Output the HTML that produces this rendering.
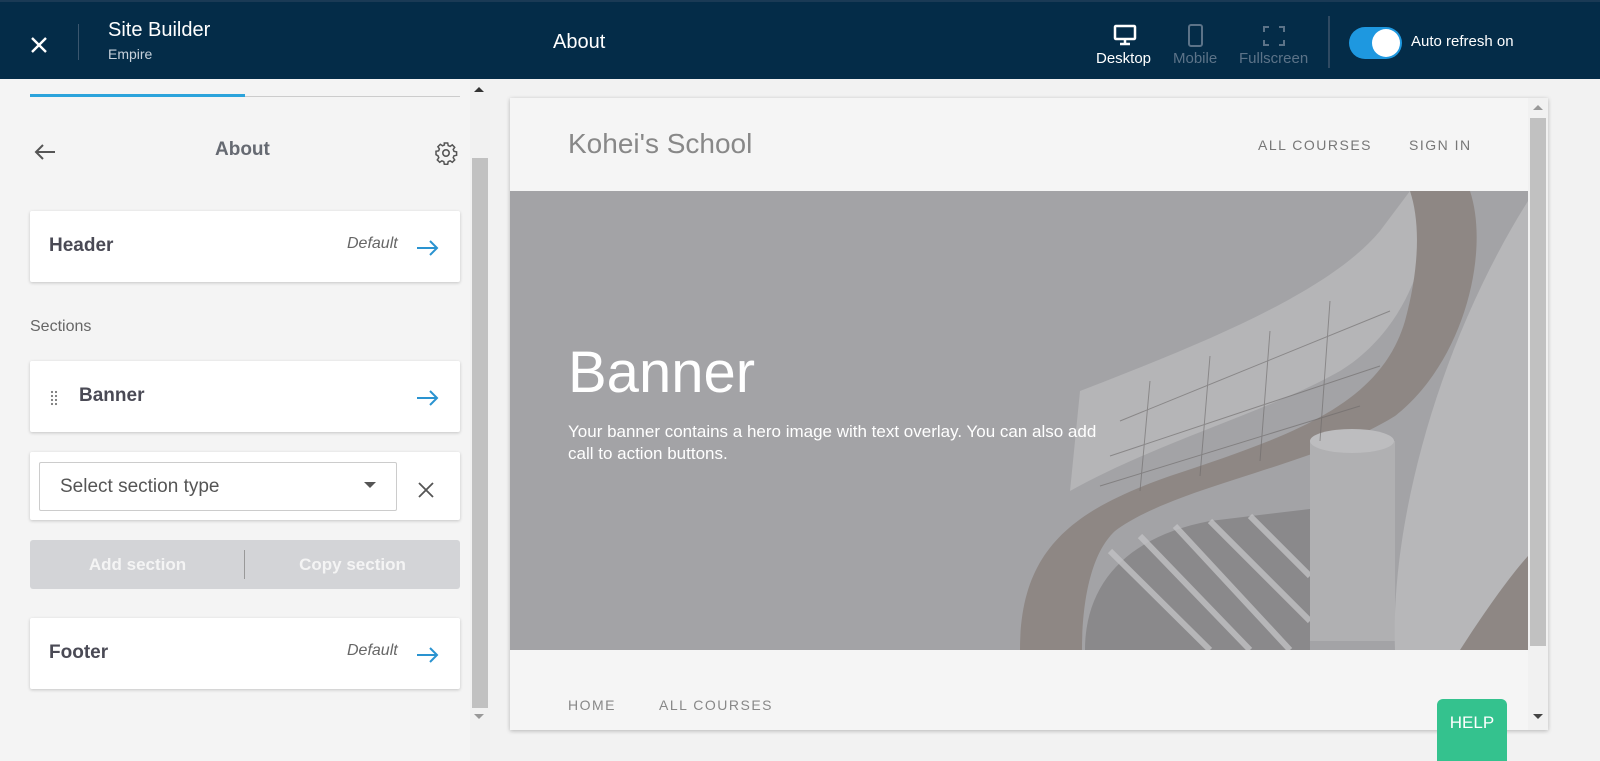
<!DOCTYPE html>
<html><head><style>
*{box-sizing:border-box;margin:0;padding:0}
body{width:1600px;height:761px;overflow:hidden;background:#f2f2f2;font-family:"Liberation Sans",sans-serif;position:relative}
.top{position:absolute;left:0;top:0;width:1600px;height:79px;background:#042c48;border-top:2px solid #1a3a55;color:#fff}
.abs{position:absolute}
.card{position:absolute;left:30px;width:430px;background:#fff;box-shadow:0 1px 3px rgba(0,0,0,.2);border-radius:2px}
.lbl{font-weight:bold;font-size:19px;color:#4a4a55}
.def{font-style:italic;color:#666;font-size:16px}
</style></head><body>
<div class="top">
 <svg class="abs" style="left:30px;top:34px" width="18" height="18" viewBox="0 0 18 18"><path d="M2 2L16 16M16 2L2 16" stroke="#fff" stroke-width="2.4"/></svg>
 <div class="abs" style="left:78px;top:22px;width:1px;height:36px;background:#3a566e"></div>
 <div class="abs" style="left:108px;top:17px;font-size:20px">Site Builder</div>
 <div class="abs" style="left:108px;top:44px;font-size:14px;color:#c8d2dc">Empire</div>
 <div class="abs" style="left:553px;top:29px;font-size:20px">About</div>
 <svg class="abs" style="left:1113px;top:22px" width="24" height="22" viewBox="0 0 24 22"><rect x="2" y="2" width="20" height="13" rx="1" fill="none" stroke="#fff" stroke-width="2.5"/><path d="M12 15v4M7 20h10" stroke="#fff" stroke-width="2.5"/></svg>
 <div class="abs" style="left:1096px;top:48px;font-size:15px">Desktop</div>
 <svg class="abs" style="left:1187px;top:21px" width="18" height="26"><rect x="2" y="2" width="13" height="21" rx="2" fill="none" stroke="#5c7388" stroke-width="2"/></svg>
 <div class="abs" style="left:1173px;top:48px;font-size:15px;color:#5c7388">Mobile</div>
 <svg class="abs" style="left:1263px;top:24px" width="22" height="20"><path d="M1 6V1h5M16 1h5v5M21 14v5h-5M6 19H1v-5" fill="none" stroke="#5c7388" stroke-width="2"/></svg>
 <div class="abs" style="left:1239px;top:48px;font-size:15px;color:#5c7388">Fullscreen</div>
 <div class="abs" style="left:1328px;top:14px;width:2px;height:52px;background:#2f4a62"></div>
 <div class="abs" style="left:1349px;top:25px;width:53px;height:32px;border-radius:16px;background:#1e98e0"></div>
 <div class="abs" style="left:1372px;top:27px;width:28px;height:28px;border-radius:50%;background:#fff"></div>
 <div class="abs" style="left:1411px;top:31px;font-size:15px">Auto refresh on</div>
</div>
<div class="abs" style="left:0;top:79px;width:470px;height:682px;background:#f4f4f4"></div>
<div class="abs" style="left:30px;top:96px;width:430px;height:1px;background:#ccc"></div>
<div class="abs" style="left:30px;top:94px;width:215px;height:3px;background:#2ba3db"></div>
<svg class="abs" style="left:33px;top:143px" width="24" height="18"><path d="M22 9H3M10 2L3 9l7 7" fill="none" stroke="#555" stroke-width="2"/></svg>
<div class="abs lbl" style="left:215px;top:139px;color:#666a72">About</div>
<svg class="abs" style="left:434px;top:141px" width="24" height="24" viewBox="0 0 24 24"><circle cx="12" cy="12" r="3.2" fill="none" stroke="#555" stroke-width="1.6"/><path d="M10.3 2h3.4l.5 2.6 1.9.8 2.2-1.5 2.4 2.4-1.5 2.2.8 1.9 2.6.5v3.4l-2.6.5-.8 1.9 1.5 2.2-2.4 2.4-2.2-1.5-1.9.8-.5 2.6h-3.4l-.5-2.6-1.9-.8-2.2 1.5-2.4-2.4 1.5-2.2-.8-1.9L2 13.7v-3.4l2.6-.5.8-1.9-1.5-2.2 2.4-2.4 2.2 1.5 1.9-.8z" fill="none" stroke="#555" stroke-width="1.5"/></svg>
<div class="card" style="top:211px;height:71px"><div class="abs lbl" style="left:19px;top:24px">Header</div><div class="abs def" style="left:317px;top:24px">Default</div><svg class="abs" style="left:386px;top:28px" width="24" height="18"><path d="M1 9h20M14 2l7 7-7 7" fill="none" stroke="#2a93d0" stroke-width="2"/></svg></div>
<div class="abs" style="left:30px;top:318px;font-size:16px;color:#666">Sections</div>
<div class="card" style="top:361px;height:71px"><svg class="abs" style="left:20px;top:29px" width="8" height="18"><g fill="#777"><circle cx="2" cy="2" r="1.1"/><circle cx="6" cy="2" r="1.1"/><circle cx="2" cy="6" r="1.1"/><circle cx="6" cy="6" r="1.1"/><circle cx="2" cy="10" r="1.1"/><circle cx="6" cy="10" r="1.1"/><circle cx="2" cy="14" r="1.1"/><circle cx="6" cy="14" r="1.1"/></g></svg><div class="abs lbl" style="left:49px;top:24px">Banner</div><svg class="abs" style="left:386px;top:28px" width="24" height="18"><path d="M1 9h20M14 2l7 7-7 7" fill="none" stroke="#2a93d0" stroke-width="2"/></svg></div>
<div class="card" style="top:452px;height:68px"><div class="abs" style="left:9px;top:10px;width:358px;height:49px;border:1px solid #ccc;border-radius:2px"></div><div class="abs" style="left:30px;top:24px;font-size:19px;color:#555">Select section type</div><div class="abs" style="left:334px;top:30px;width:0;height:0;border-left:6px solid transparent;border-right:6px solid transparent;border-top:6px solid #555"></div><svg class="abs" style="left:388px;top:30px" width="16" height="16"><path d="M1 1l14 14M15 1L1 15" stroke="#555" stroke-width="1.8"/></svg></div>
<div class="abs" style="left:30px;top:540px;width:430px;height:49px;background:#d3d4d7;border-radius:3px"><div class="abs" style="left:0;width:215px;top:15px;text-align:center;font-weight:bold;color:#f4f4f4;font-size:17px">Add section</div><div class="abs" style="left:214px;top:10px;width:1px;height:29px;background:#999"></div><div class="abs" style="left:215px;width:215px;top:15px;text-align:center;font-weight:bold;color:#f4f4f4;font-size:17px">Copy section</div></div>
<div class="card" style="top:618px;height:71px"><div class="abs lbl" style="left:19px;top:24px">Footer</div><div class="abs def" style="left:317px;top:24px">Default</div><svg class="abs" style="left:386px;top:28px" width="24" height="18"><path d="M1 9h20M14 2l7 7-7 7" fill="none" stroke="#2a93d0" stroke-width="2"/></svg></div>
<div class="abs" style="left:470px;top:79px;width:20px;height:682px;background:#f1f1f1"></div>
<div class="abs" style="left:474px;top:87px;border-left:5px solid transparent;border-right:5px solid transparent;border-bottom:5px solid #333"></div>
<div class="abs" style="left:472px;top:158px;width:16px;height:550px;background:#c1c1c1"></div>
<div class="abs" style="left:474px;top:714px;border-left:5px solid transparent;border-right:5px solid transparent;border-top:5px solid #999"></div>
<div class="abs" style="left:510px;top:98px;width:1038px;height:632px;background:#f5f5f5;box-shadow:0 1px 4px rgba(0,0,0,.25)"></div>
<div class="abs" style="left:568px;top:128px;font-size:28px;color:#888">Kohei's School</div>
<div class="abs" style="left:1258px;top:137px;font-size:14px;letter-spacing:1.5px;color:#777">ALL COURSES</div>
<div class="abs" style="left:1409px;top:137px;font-size:14px;letter-spacing:1.5px;color:#777">SIGN IN</div>
<svg class="abs" style="left:510px;top:191px" width="1018" height="459" viewBox="0 0 1018 459">
<rect width="1018" height="459" fill="#a3a3a6"/>
<path d="M570 200 C700 150 820 100 870 40 L900 0 L915 0 C925 60 895 140 830 180 C760 220 650 250 560 300 Z" fill="#b5b5b7"/>
<path d="M510 459 C510 360 560 320 660 285 C780 245 870 215 895 130 C910 75 910 30 900 0 L960 0 C980 60 955 170 885 225 C805 275 665 295 605 340 C578 365 572 420 572 459 Z" fill="#8e8784"/>
<path d="M575 459 C575 390 620 345 700 330 L800 318 L800 459 Z" fill="#8a898b"/>
<g stroke="#c2c2c4" stroke-width="6" opacity=".8"><path d="M600 360 L700 459M630 345 L740 459M665 335 L780 459M700 330 L800 430M740 325 L800 385"/></g>
<rect x="800" y="250" width="85" height="200" fill="#b0b0b2"/>
<ellipse cx="842" cy="250" rx="42" ry="12" fill="#bdbdbf"/>
<path d="M885 459 C880 330 930 150 1018 10 L1018 459 Z" fill="#b7b7b9"/>
<path d="M950 459 C975 420 1000 385 1018 365 L1018 459 Z" fill="#8e8784"/>
<g stroke="#6d6a6a" stroke-width="1" fill="none" opacity=".6">
<path d="M610 230 L880 120 M600 265 L870 175 M590 295 L850 215"/>
<path d="M640 190 L630 300 M700 165 L690 285 M760 140 L750 270 M820 110 L810 250"/>
</g>
</svg>
<div class="abs" style="left:568px;top:339px;font-size:58px;color:#fff;font-weight:300">Banner</div>
<div class="abs" style="left:568px;top:421px;width:548px;font-size:17px;line-height:22px;color:#fff">Your banner contains a hero image with text overlay. You can also add call to action buttons.</div>
<div class="abs" style="left:568px;top:697px;font-size:14px;letter-spacing:1.5px;color:#888">HOME</div>
<div class="abs" style="left:659px;top:697px;font-size:14px;letter-spacing:1.5px;color:#888">ALL COURSES</div>
<div class="abs" style="left:1528px;top:98px;width:20px;height:632px;background:#f1f1f1"></div>
<div class="abs" style="left:1533px;top:105px;border-left:5px solid transparent;border-right:5px solid transparent;border-bottom:5px solid #999"></div>
<div class="abs" style="left:1530px;top:118px;width:16px;height:528px;background:#c1c1c1"></div>
<div class="abs" style="left:1533px;top:714px;border-left:5px solid transparent;border-right:5px solid transparent;border-top:5px solid #444"></div>
<div class="abs" style="left:1437px;top:699px;width:70px;height:62px;background:#34c28e;border-radius:6px 6px 0 0;color:#fff;font-size:17px;text-align:center;padding-top:14px">HELP</div>
</body></html>
